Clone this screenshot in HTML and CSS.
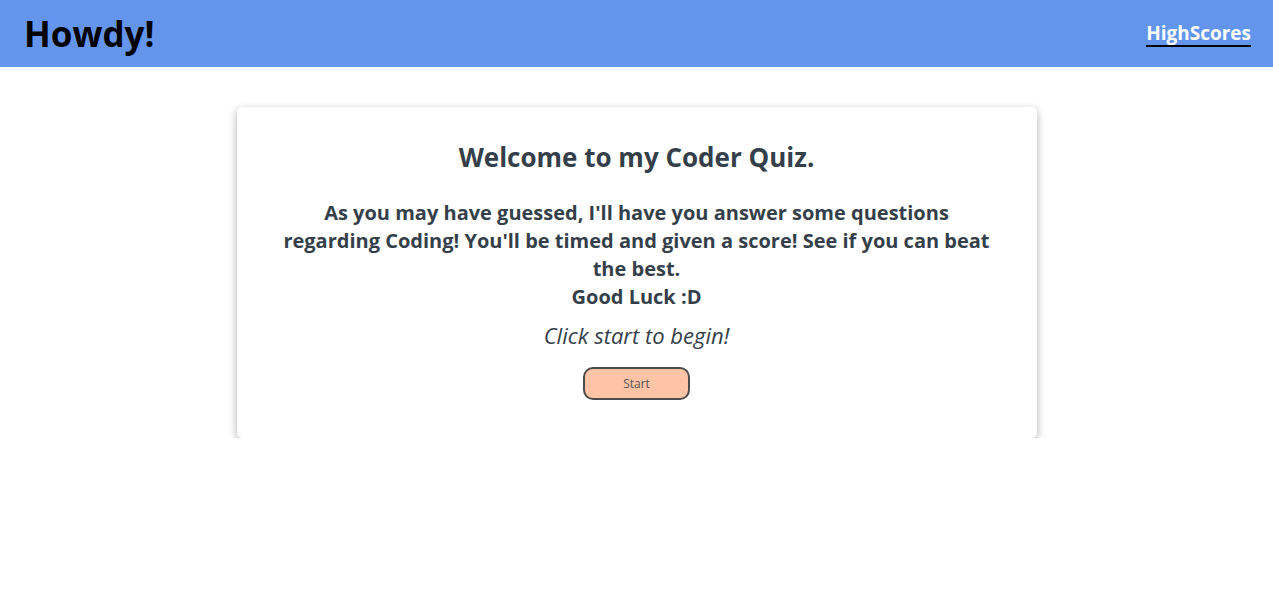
FILE: index.html
```html
<!DOCTYPE html>
<html lang="en">
<head>
<meta charset="utf-8">
<title>Coder Quiz</title>
<link rel="stylesheet" href="styles.css">
</head>
<body>
<header class="topbar">
  <h1 class="brand">Howdy!</h1>
  <a class="scores-link" href="#">HighScores</a>
</header>
<main class="page">
  <section class="card">
    <h2 class="card-title">Welcome to my Coder Quiz.</h2>
    <p class="intro">As you may have guessed, I'll have you answer some questions regarding Coding! You'll be timed and given a score! See if you can beat the best.<br>Good Luck :D</p>
    <p class="hint">Click start to begin!</p>
    <button class="start-btn" type="button">Start</button>
  </section>
</main>
</body>
</html>
```
FILE: styles.css
```css
* { box-sizing: border-box; }
html, body { margin: 0; padding: 0; background: #fff; }
body { font-family: "Open Sans", "Noto Sans", sans-serif; color: #353f4a; }

.topbar {
  height: 67px;
  background: #6495ed;
  display: flex;
  align-items: center;
  justify-content: space-between;
  padding: 0 22px 0 24px;
}
.brand {
  margin: 0;
  font-size: 35px;
  font-weight: 700;
  color: #000;
}
.scores-link {
  color: #fff;
  font-weight: 700;
  font-size: 19px;
  text-decoration: none;
  border-bottom: 2px solid #000;
  line-height: 24px;
  margin-bottom: 0;
}

.page {
  display: flex;
  justify-content: center;
  padding-top: 40px;
}
.card {
  width: 800px;
  background: #fff;
  border-radius: 5px;
  box-shadow: 0 3px 8px rgba(0,0,0,0.32);
  padding: 33px 40px 38px;
  display: flex;
  flex-direction: column;
  align-items: center;
  text-align: center;
}
.card-title {
  margin: 0 0 25px;
  font-size: 26px;
  line-height: 34px;
  font-weight: 700;
}
.intro {
  margin: 0;
  font-size: 20px;
  line-height: 28px;
  font-weight: 700;
}
.hint {
  margin: 9px 0 17px;
  font-size: 22px;
  line-height: 30px;
  font-style: italic;
  font-weight: 400;
}
.start-btn {
  width: 107px;
  height: 33px;
  background: #ffc4a6;
  border: 2px solid #4b4b4b;
  border-radius: 10px;
  font-family: "Open Sans", sans-serif;
  font-size: 12px;
  color: #555;
  cursor: pointer;
}
```
